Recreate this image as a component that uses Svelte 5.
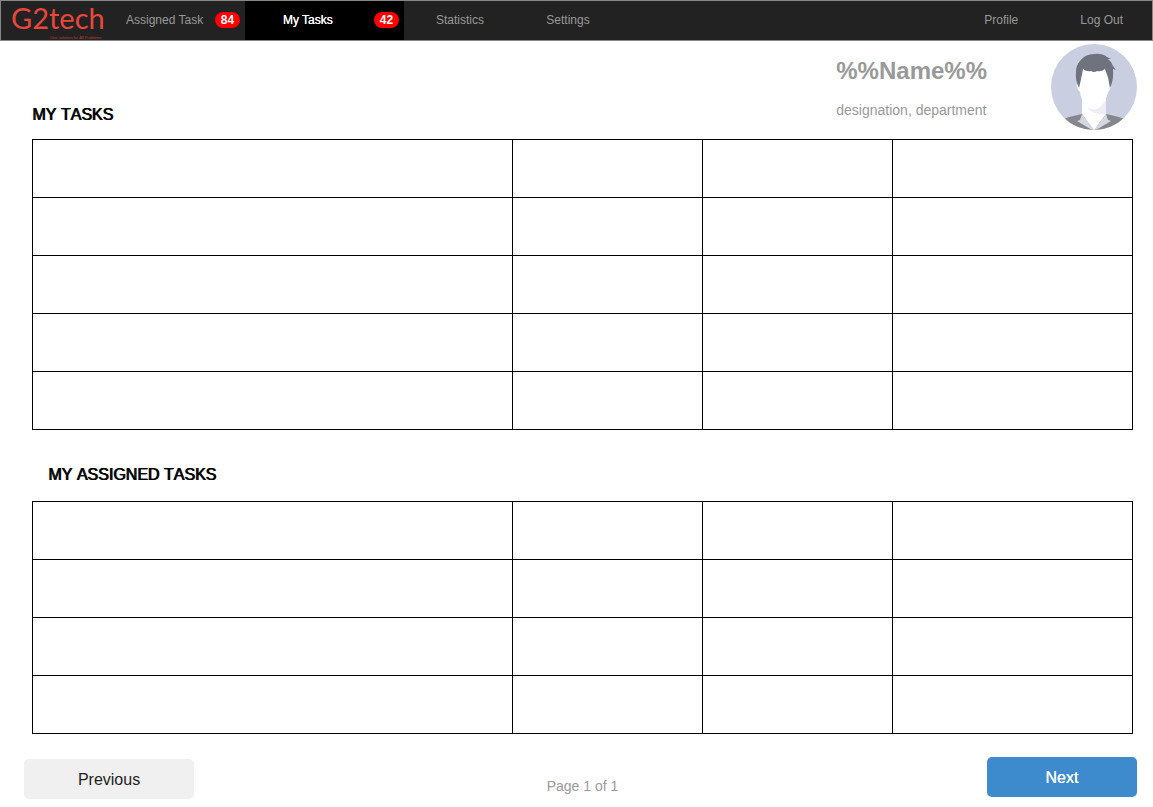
<script>
  const links = [
    { label: 'Assigned Task', badge: 84, kind: 'assigned' },
    { label: 'My Tasks', badge: 42, kind: 'mine', active: true },
    { label: 'Statistics', kind: 'plain' },
    { label: 'Settings', kind: 'plain' }
  ];
  const account = ['Profile', 'Log Out'];
  const columns = [480, 190, 190, 240];
  const total = 1100;
</script>

{#snippet grid(rows, labelledby)}
  <table aria-labelledby={labelledby}>
    <colgroup>
      {#each columns as c}
        <col style:width="{(c / total) * 100}%" />
      {/each}
    </colgroup>
    <tbody>
      {#each Array(rows) as _}
        <tr>
          {#each columns as _c}<td></td>{/each}
        </tr>
      {/each}
    </tbody>
  </table>
{/snippet}

<nav>
  <a class="logo" href="#home">
    <span class="brand">G2tech</span>
    <span class="tagline">One solution for All Problems</span>
  </a>
  {#each links as l}
    <a class="item {l.kind}" class:active={l.active} href="#{l.kind}">
      <span class="label">{l.label}</span>
      {#if l.badge}<span class="badge">{l.badge}</span>{/if}
    </a>
  {/each}
  <div class="account">
    {#each account as a}
      <a class="item" href="#account">{a}</a>
    {/each}
  </div>
</nav>

<main>
  <header>
    <h2 id="my">MY TASKS</h2>
    <div class="person">
      <h1>%%Name%%</h1>
      <p>designation, department</p>
    </div>
    <svg class="avatar" viewBox="0 0 86 86" aria-hidden="true">
      <defs><clipPath id="disc"><circle cx="43" cy="43" r="43" /></clipPath></defs>
      <g clip-path="url(#disc)">
        <rect width="86" height="86" fill="#c9cfe1" />
        <path d="M31 55H55V72L43 86L31 72Z" fill="#fff" />
        <path d="M10 76Q20 72 31 70L43 86H10ZM55 70Q66 72 76 76V86H43Z" fill="#85878c" />
        <path d="M31 70L43 86H41L26 77L29 76ZM55 70L43 86H45L60 77L57 76Z" fill="#d5d8de" />
        <path d="M31 69L43 86L55 69Z" fill="#fff" />
        <path d="M36 64Q46 67 55 56V70Q43 71 36 64Z" fill="#eceef4" />
        <path d="M31 24H55L59 38Q61 39 60 42Q59 47 57 48Q55 57 50 62Q43 69 36 62Q30 57 29 48Q27 47 26 43Q25 39 27 38Z" fill="#fff" />
        <path d="M28 44Q24 36 25 28Q25 21 29 17Q34 10 43 10Q51 9 56 13L60 15L57 15Q61 18 62 22L65 26L62 25Q63 36 59 44Q58 34 54 25Q50 28 46 27Q43 29 40 27Q36 28 32 25Q30 36 28 44Z" fill="#6f737e" />
      </g>
    </svg>
  </header>
  {@render grid(5, 'my')}

  <h2 id="given" class="second">MY ASSIGNED TASKS</h2>
  {@render grid(4, 'given')}
</main>

<footer>
  <button class="prev" type="button">Previous</button>
  <span class="page">Page 1 of 1</span>
  <button class="next" type="button">Next</button>
</footer>

<style>
  :global(body) {
    background: #fff;
    font-family: 'Liberation Sans', Arial, sans-serif;
  }
  nav {
    display: flex;
    box-sizing: border-box;
    height: 41px;
    background: #222;
    border: 1px solid #858685;
    font-size: 12px;
    line-height: 16px;
  }
  a {
    color: #999;
    text-decoration: none;
  }
  .logo {
    display: flex;
    flex-direction: column;
    box-sizing: border-box;
    width: 115px;
    padding-left: 10px;
    color: #e8473c;
  }
  .brand {
    font-family: Lato, sans-serif;
    font-size: 29px;
    line-height: 34px;
    white-space: nowrap;
  }
  .tagline {
    padding-left: 39px;
    font-size: 4px;
    line-height: 5px;
    white-space: nowrap;
    opacity: 0.7;
  }
  .item {
    display: flex;
    align-items: center;
    justify-content: center;
    padding-bottom: 2px;
    white-space: nowrap;
  }
  .assigned,
  .mine {
    box-sizing: border-box;
    justify-content: space-between;
    padding-right: 5px;
  }
  .assigned {
    width: 129px;
    padding-left: 10px;
  }
  .mine {
    width: 159px;
    margin-right: 2px;
    padding-left: 38px;
  }
  .plain {
    width: 108px;
  }
  .active {
    background: #000;
    color: #fff;
  }
  .active .label,
  .next {
    text-shadow: 0 0 0 currentColor;
  }
  .badge {
    width: 25px;
    border-radius: 8px;
    background: #f00;
    color: #fff;
    font-weight: bold;
    text-align: center;
  }
  .account {
    display: flex;
    gap: 62px;
    margin-left: auto;
    padding-right: 29px;
  }
  main {
    padding: 0 20px 0 32px;
  }
  header {
    display: flex;
    height: 98px;
    margin-right: -4px;
  }
  h1,
  h2,
  p {
    margin: 0;
  }
  h2 {
    color: #000;
    font-size: 16px;
    font-weight: normal;
    font-kerning: none;
    line-height: 20px;
    text-shadow: 1px 0 0 currentColor;
  }
  header h2 {
    margin: auto auto 14px 0;
  }
  .person {
    padding-top: 15px;
    color: #999;
  }
  h1 {
    font-size: 24px;
    line-height: 30px;
  }
  p {
    padding-top: 14px;
    font-size: 14px;
    line-height: 20px;
  }
  .avatar {
    width: 86px;
    height: 86px;
    margin: 3px 0 0 64px;
  }
  table {
    width: 100%;
    table-layout: fixed;
    border-collapse: collapse;
  }
  td {
    height: 57px;
    padding: 0;
    border: 1px solid #000;
  }
  .second {
    padding: 35px 0 16px 16px;
  }
  footer {
    display: grid;
    grid-template-columns: 170px 1fr 150px;
    align-items: start;
    padding: 23px 16px 8px 24px;
  }
  button {
    height: 40px;
    padding: 2px 0 0;
    border: 0;
    border-radius: 5px;
    font: 16px 'Liberation Sans', Arial, sans-serif;
  }
  .prev {
    margin-top: 2px;
    background: #f0f0f0;
    color: #222;
  }
  .next {
    background: #3d8acd;
    color: #fff;
  }
  .page {
    padding: 19px 16px 0 0;
    color: #999;
    font-size: 14px;
    line-height: 20px;
    text-align: center;
  }
</style>
